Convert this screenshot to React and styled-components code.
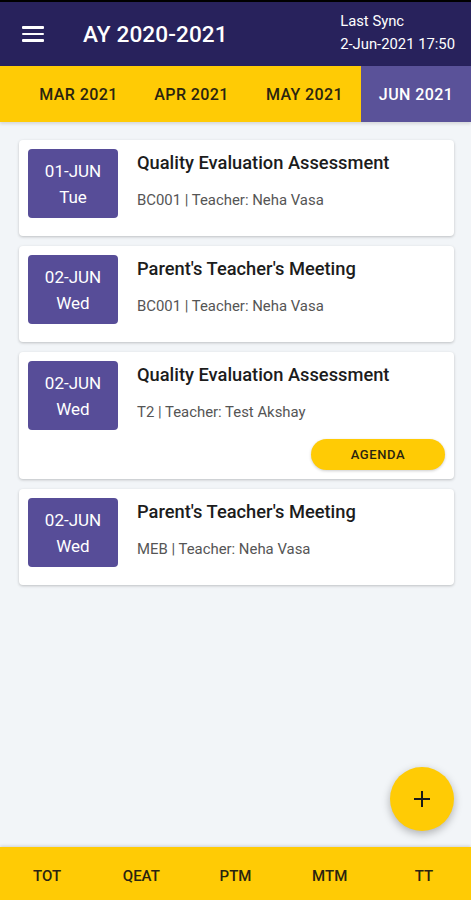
import React from 'react';
import styled, { createGlobalStyle } from 'styled-components';

const GlobalStyle = createGlobalStyle`
  html, body {
    margin: 0;
    padding: 0;
    background: #f2f5f8;
    font-family: Roboto, "Noto Sans", sans-serif;
  }
  * {
    box-sizing: border-box;
  }
`;

const Screen = styled.div`
  width: 471px;
  height: 900px;
  display: flex;
  flex-direction: column;
  background: #f2f5f8;
  border-top: 2px solid #000;
  position: relative;
  overflow: hidden;
`;

const Header = styled.div`
  height: 64px;
  background: #28225c;
  display: flex;
  align-items: center;
  padding: 0 16px 0 22px;
  color: #fff;
`;

const MenuButton = styled.div`
  width: 22px;
  display: flex;
  flex-direction: column;
  gap: 4px;
  margin-right: 39px;
  span {
    display: block;
    height: 2.5px;
    background: #fff;
    border-radius: 1px;
  }
`;

const Title = styled.div`
  flex: 1;
  font-size: 22.6px;
  font-weight: 500;
  letter-spacing: 0.1px;
`;

const Sync = styled.div`
  font-size: 14.8px;
  line-height: 23px;
  margin-top: -2px;
`;

const Tabs = styled.div`
  height: 56px;
  background: #ffcb05;
  display: flex;
  padding-left: 22px;
  box-shadow: 0 2px 3px rgba(0, 0, 0, 0.12);
  position: relative;
  z-index: 1;
`;

const Tab = styled.div`
  width: ${p => (p.$last ? 'auto' : '113px')};
  flex: ${p => (p.$last ? 1 : 'none')};
  display: flex;
  align-items: center;
  justify-content: center;
  font-size: 16px;
  font-weight: 500;
  letter-spacing: 0.4px;
  color: ${p => (p.$active ? '#fff' : '#2a2410')};
  background: ${p => (p.$active ? '#5a5299' : 'transparent')};
`;

const List = styled.div`
  flex: 1;
  padding: 18px 17px 0 19px;
  display: flex;
  flex-direction: column;
  gap: 10px;
`;

const Card = styled.div`
  background: #fff;
  border-radius: 4px;
  box-shadow: 0 1px 3px rgba(0, 0, 0, 0.22);
  padding: ${p => (p.$withActions ? '9px' : '9px 9px 18px 9px')};
  display: flex;
  flex-direction: column;
`;

const Row = styled.div`
  display: flex;
`;

const DateBox = styled.div`
  width: 90px;
  height: 69px;
  border-radius: 4px;
  background: #574d98;
  color: #fff;
  display: flex;
  flex-direction: column;
  align-items: center;
  justify-content: center;
  font-size: 17px;
  line-height: 26px;
`;

const Info = styled.div`
  margin-left: 19px;
  padding-top: 2px;
`;

const EventTitle = styled.div`
  font-size: 18.3px;
  font-weight: 500;
  color: #1c1c1c;
  line-height: 23px;
`;

const Meta = styled.div`
  margin-top: 17px;
  font-size: 14.9px;
  color: #555;
`;

const Actions = styled.div`
  display: flex;
  justify-content: flex-end;
  margin-top: 9px;
`;

const AgendaButton = styled.button`
  width: 134px;
  height: 31px;
  border: none;
  border-radius: 16px;
  background: #ffcb05;
  box-shadow: 0 1px 3px rgba(0, 0, 0, 0.2);
  font-family: Roboto, sans-serif;
  font-size: 13px;
  font-weight: 500;
  letter-spacing: 0.6px;
  color: #2a2410;
`;

const Fab = styled.div`
  position: absolute;
  right: 17px;
  bottom: 69px;
  width: 64px;
  height: 64px;
  border-radius: 50%;
  background: #ffcb05;
  box-shadow: 0 3px 8px rgba(0, 0, 0, 0.28);
  display: flex;
  align-items: center;
  justify-content: center;
`;

const BottomBar = styled.div`
  height: 53px;
  background: #ffcb05;
  display: grid;
  grid-template-columns: repeat(5, 1fr);
  box-shadow: 0 -1px 3px rgba(0, 0, 0, 0.15);
`;

const BottomItem = styled.div`
  display: flex;
  align-items: center;
  justify-content: center;
  padding-top: 4px;
  font-size: 15px;
  font-weight: 500;
  color: #2a2410;
`;

const events = [
  { date: '01-JUN', day: 'Tue', title: 'Quality Evaluation Assessment', meta: 'BC001 | Teacher: Neha Vasa' },
  { date: '02-JUN', day: 'Wed', title: "Parent's Teacher's Meeting", meta: 'BC001 | Teacher: Neha Vasa' },
  { date: '02-JUN', day: 'Wed', title: 'Quality Evaluation Assessment', meta: 'T2 | Teacher: Test Akshay', agenda: true },
  { date: '02-JUN', day: 'Wed', title: "Parent's Teacher's Meeting", meta: 'MEB | Teacher: Neha Vasa' },
];

const months = ['MAR 2021', 'APR 2021', 'MAY 2021', 'JUN 2021'];
const bottom = ['TOT', 'QEAT', 'PTM', 'MTM', 'TT'];

const App = () => {
  return (
    <>
      <GlobalStyle />
      <Screen>
        <Header>
          <MenuButton>
            <span />
            <span />
            <span />
          </MenuButton>
          <Title>AY 2020-2021</Title>
          <Sync>
            <div>Last Sync</div>
            <div>2-Jun-2021 17:50</div>
          </Sync>
        </Header>
        <Tabs>
          {months.map((m, idx) => (
            <Tab key={m} $active={idx === 3} $last={idx === 3}>
              {m}
            </Tab>
          ))}
        </Tabs>
        <List>
          {events.map((e, idx) => (
            <Card key={idx} $withActions={e.agenda}>
              <Row>
                <DateBox>
                  <div>{e.date}</div>
                  <div>{e.day}</div>
                </DateBox>
                <Info>
                  <EventTitle>{e.title}</EventTitle>
                  <Meta>{e.meta}</Meta>
                </Info>
              </Row>
              {e.agenda && (
                <Actions>
                  <AgendaButton>AGENDA</AgendaButton>
                </Actions>
              )}
            </Card>
          ))}
        </List>
        <Fab>
          <svg width="20" height="20" viewBox="0 0 20 20">
            <path d="M10 2v16M2 10h16" stroke="#1a1a1a" strokeWidth="2" />
          </svg>
        </Fab>
        <BottomBar>
          {bottom.map(b => (
            <BottomItem key={b}>{b}</BottomItem>
          ))}
        </BottomBar>
      </Screen>
    </>
  );
};

export default App;
